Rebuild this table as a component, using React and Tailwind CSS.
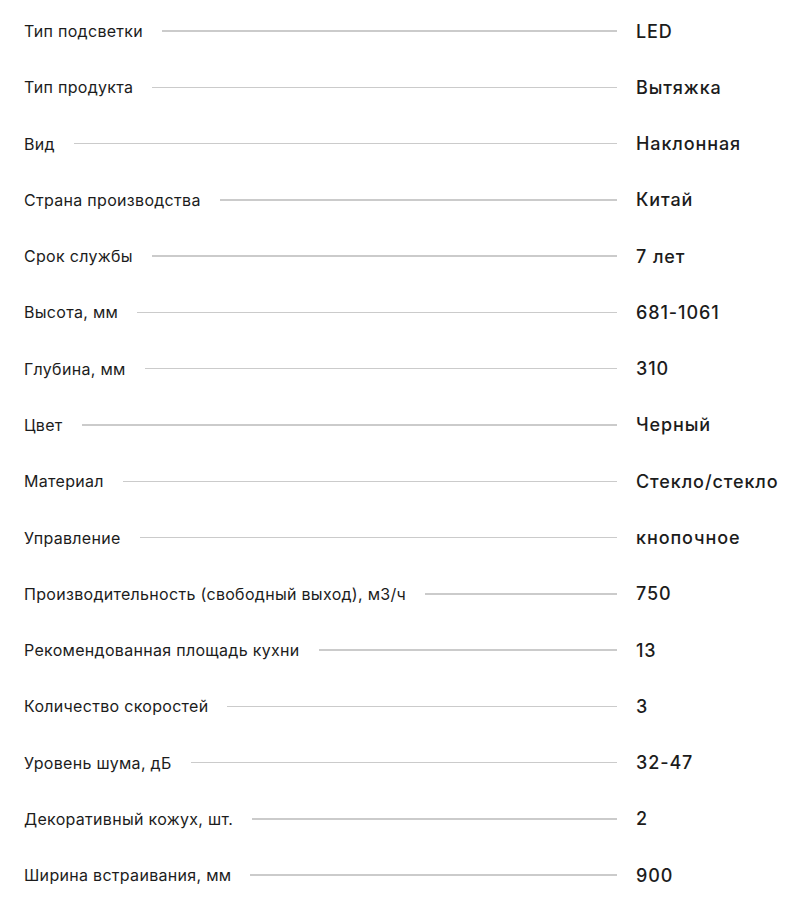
export default function App() {
  const rows = [
    ["Тип подсветки", "LED"],
    ["Тип продукта", "Вытяжка"],
    ["Вид", "Наклонная"],
    ["Страна производства", "Китай"],
    ["Срок службы", "7 лет"],
    ["Высота, мм", "681-1061"],
    ["Глубина, мм", "310"],
    ["Цвет", "Черный"],
    ["Материал", "Стекло/стекло"],
    ["Управление", "кнопочное"],
    ["Производительность (свободный выход), м3/ч", "750"],
    ["Рекомендованная площадь кухни", "13"],
    ["Количество скоростей", "3"],
    ["Уровень шума, дБ", "32-47"],
    ["Декоративный кожух, шт.", "2"],
    ["Ширина встраивания, мм", "900"],
  ];
  return (
    <div className="w-[785px] h-[903px] bg-white overflow-hidden pt-[3px] pl-[24px]" style={{ fontFamily: "Inter, 'Noto Sans', sans-serif" }}>
      {rows.map(([l, v]) => (
        <div key={l} className="flex items-center h-[56.27px]">
          <span className="text-[16px] tracking-[0.3px] text-[#1c1c1c] whitespace-nowrap">{l}</span>
          <div className="flex-1 h-[1.5px] bg-[#cbcbcb] ml-[19px] mr-[19px]" />
          <span className="w-[149px] shrink-0 text-[18px] font-medium tracking-[0.9px] text-[#1c1c1c] whitespace-nowrap">{v}</span>
        </div>
      ))}
    </div>
  );
}
